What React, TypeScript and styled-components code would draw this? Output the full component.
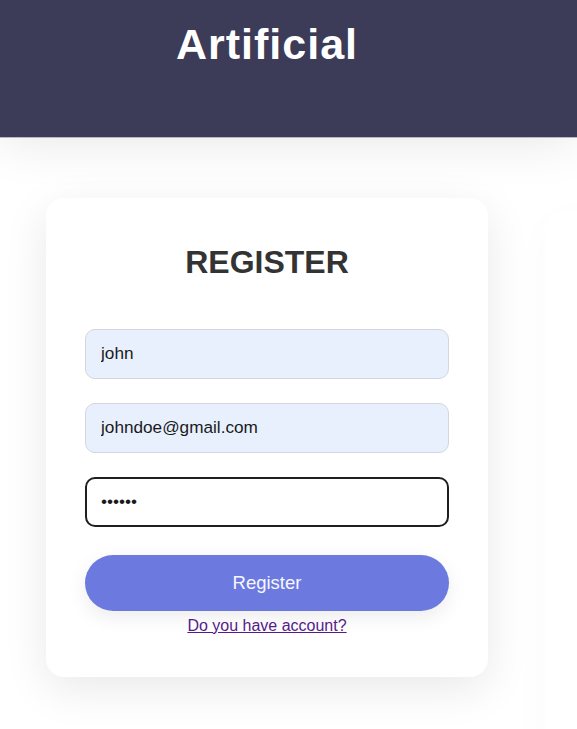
import React from "react";
import styled, { createGlobalStyle } from "styled-components";

const GlobalStyle = createGlobalStyle`
  html, body {
    margin: 0;
    padding: 0;
    background: #ffffff;
    overflow: hidden;
    font-family: "Liberation Sans", Arial, sans-serif;
  }
  * { box-sizing: border-box; }
`;

const Header = styled.header`
  position: relative;
  z-index: 1;
  height: 138px;
  background: #3c3b58;
  border-bottom: 1px solid #b9b8c6;
  box-shadow: 0 6px 50px rgba(0, 0, 0, 0.09);
`;

const HeaderInner = styled.div`
  width: 534px;
  padding-top: 20px;
  text-align: center;
`;

const Brand = styled.h1`
  margin: 0;
  color: #ffffff;
  font-size: 43px;
  font-weight: 700;
  letter-spacing: 1px;
  line-height: 1.15;
`;

const Main = styled.main`
  display: flex;
  align-items: flex-start;
  gap: 57px;
  width: 100%;
  height: calc(100vh - 138px);
  overflow: hidden;
  padding: 60px 0 0 46px;
`;

const Card = styled.section`
  position: relative;
  z-index: 2;
  flex: 0 0 442px;
  padding: 46px 39px 42px;
  background: #ffffff;
  border-radius: 18px;
  box-shadow: 0 12px 45px rgba(0, 0, 0, 0.09);
  display: flex;
  flex-direction: column;
  align-items: stretch;
`;

const SideCard = styled.aside`
  position: relative;
  z-index: 2;
  flex: 0 0 442px;
  margin-top: 13px;
  height: 600px;
  background: #ffffff;
  border-radius: 18px;
  box-shadow: 0 12px 45px rgba(0, 0, 0, 0.025);
`;

const Title = styled.h2`
  margin: 0 0 48px;
  color: #333333;
  font-size: 32px;
  font-weight: 700;
  text-align: center;
  line-height: 1.15;
`;

const Form = styled.form`
  display: flex;
  flex-direction: column;
  gap: 24px;
`;

const Field = styled.input<{ $filled?: boolean; $focused?: boolean }>`
  width: 100%;
  height: 50px;
  padding: 0 15px;
  font-family: "Liberation Sans", Arial, sans-serif;
  font-size: 17.2px;
  color: #1a1a1a;
  outline: none;
  border-radius: 10px;
  background: ${(p) => (p.$filled ? "#e8f0fe" : "#ffffff")};
  border: ${(p) => (p.$focused ? "2px solid #1f1f1f" : "1px solid #d3d6dd")};
  padding-left: ${(p) => (p.$focused ? "14px" : "15px")};
  caret-color: #111111;
`;

const Button = styled.button`
  margin-top: 4px;
  height: 56px;
  width: 100%;
  border: none;
  border-radius: 28px;
  background: #6c7ae0;
  color: #f7f7ff;
  font-family: "Liberation Sans", Arial, sans-serif;
  font-size: 18.5px;
  cursor: pointer;
  box-shadow: 0 6px 20px rgba(0, 0, 0, 0.08);
`;

const LinkRow = styled.div`
  margin-top: 6px;
  text-align: center;
  line-height: 1.15;
`;

const AccountLink = styled.a`
  color: #551a8b;
  font-size: 16px;
  text-decoration: underline;
`;

export default function App() {
  const pwRef = React.useRef<HTMLInputElement>(null);
  React.useEffect(() => {
    pwRef.current?.focus();
  }, []);
  return (
    <>
      <GlobalStyle />
      <Header>
        <HeaderInner>
          <Brand>Artificial</Brand>
        </HeaderInner>
      </Header>
      <Main>
        <Card>
          <Title>REGISTER</Title>
          <Form onSubmit={(e) => e.preventDefault()}>
            <Field $filled type="text" defaultValue="john" />
            <Field $filled type="email" defaultValue="johndoe@gmail.com" />
            <Field $focused ref={pwRef} type="password" defaultValue="123456" />
            <Button type="submit">Register</Button>
          </Form>
          <LinkRow>
            <AccountLink href="#">Do you have account?</AccountLink>
          </LinkRow>
        </Card>
        <SideCard />
      </Main>
    </>
  );
}
